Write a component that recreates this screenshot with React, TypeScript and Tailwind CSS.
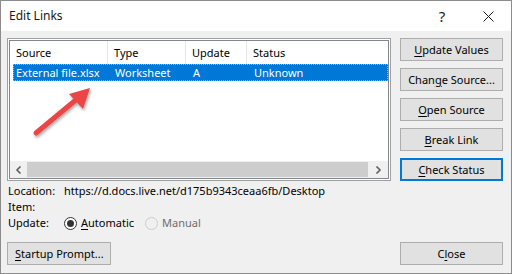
import React from "react";

function U({ children }: { children: React.ReactNode }) {
  return <span className="underline underline-offset-[2px]">{children}</span>;
}

function Btn({
  children,
  primary,
  className = "",
}: {
  children: React.ReactNode;
  primary?: boolean;
  className?: string;
}) {
  return (
    <div
      className={`flex items-center justify-center h-[23px] bg-[#e1e1e1] whitespace-nowrap text-black ${
        primary ? "border-2 border-[#0078d7]" : "border border-[#adadad]"
      } ${className}`}
    >
      {children}
    </div>
  );
}

function Arrow() {
  return (
    <svg
      className="absolute left-[13px] top-[6px]"
      width="90"
      height="110"
      viewBox="20 44 90 110"
    >
      <defs>
        <filter id="sh" x="-30%" y="-30%" width="160%" height="160%">
          <feDropShadow dx="1" dy="2" stdDeviation="1.5" floodColor="#000" floodOpacity="0.35" />
        </filter>
      </defs>
      <g filter="url(#sh)">
        <line x1="35" y1="132" x2="76" y2="98" stroke="#ec4444" strokeWidth="5" strokeLinecap="round" />
        <polygon points="89,87 68,93 82,108" fill="#ec4444" />
      </g>
    </svg>
  );
}

export default function App() {
  return (
    <div
      className="w-[512px] h-[274px] border border-[#8c8c8c] bg-[#f0f0f0] flex flex-col text-black text-[11px] leading-[16px]"
      style={{ fontFamily: '"Noto Sans", "Open Sans", sans-serif' }}
    >
      {/* Title bar */}
      <div className="h-[30px] bg-white flex items-center shrink-0">
        <div className="pl-[8px] flex-1 text-[12px] text-[#1a1a1a]">Edit Links</div>
        <div className="w-[46px] flex justify-center text-[15px] text-[#1a1a1a]">?</div>
        <div className="w-[46px] flex justify-center">
          <svg width="11" height="11" viewBox="0 0 11 11">
            <path d="M0.5 0.5 L10.5 10.5 M10.5 0.5 L0.5 10.5" stroke="#1a1a1a" strokeWidth="1" />
          </svg>
        </div>
      </div>

      {/* Body */}
      <div className="flex-1 flex flex-col pt-[7px] pl-[6px] pr-[8px] pb-[8px]">
        <div className="flex gap-[9px]">
          {/* List view */}
          <div className="relative w-[384px] h-[143px] border border-[#a0a0a0] bg-white p-px">
            <div className="w-full h-full border border-[#828790] flex flex-col">
              {/* Header */}
              <div className="h-[23px] flex items-center shrink-0">
                <div className="w-[98px] h-full flex items-center pl-[6px] border-r border-[#e5e5e5]">Source</div>
                <div className="w-[78px] h-full flex items-center pl-[6px] border-r border-[#e5e5e5]">Type</div>
                <div className="w-[61px] h-full flex items-center pl-[6px] border-r border-[#e5e5e5]">Update</div>
                <div className="flex-1 h-full flex items-center pl-[6px]">Status</div>
              </div>
              {/* Selected row */}
              <div className="ml-[3px] h-[17px] bg-[#0078d7] text-white flex items-center border border-dotted border-[#f3a04a] whitespace-nowrap">
                <div className="w-[95px] pl-[2px]">External file.xlsx</div>
                <div className="w-[78px] pl-[6px]">Worksheet</div>
                <div className="w-[61px] pl-[6px]">A</div>
                <div className="flex-1 pl-[6px]">Unknown</div>
              </div>
              <div className="flex-1" />
              {/* Horizontal scrollbar */}
              <div className="h-[17px] bg-[#f0f0f0] flex items-center shrink-0">
                <div className="w-[17px] h-full flex items-center justify-center">
                  <svg width="8" height="8" viewBox="0 0 8 8">
                    <path d="M5.5 0.5 L2 4 L5.5 7.5" stroke="#606060" strokeWidth="1.6" fill="none" />
                  </svg>
                </div>
                <div className="flex-1 h-full py-px">
                  <div className="h-full w-full bg-[#cdcdcd]" />
                </div>
                <div className="w-[20px] h-full flex items-center justify-center">
                  <svg width="8" height="8" viewBox="0 0 8 8">
                    <path d="M2.5 0.5 L6 4 L2.5 7.5" stroke="#606060" strokeWidth="1.6" fill="none" />
                  </svg>
                </div>
              </div>
            </div>
            <Arrow />
          </div>

          {/* Right buttons */}
          <div className="w-[103px] flex flex-col gap-[7px]">
            <Btn>
              <U>U</U>pdate Values
            </Btn>
            <Btn>
              Chan<U>g</U>e Source...
            </Btn>
            <Btn>
              <U>O</U>pen Source
            </Btn>
            <Btn>
              <U>B</U>reak Link
            </Btn>
            <Btn primary>
              <U>C</U>heck Status
            </Btn>
          </div>
        </div>

        {/* Info */}
        <div className="mt-[2px] flex flex-col pl-px whitespace-nowrap">
          <div className="flex h-[16px] items-center">
            <div className="w-[56px]">Location:</div>
            <div>https://d.docs.live.net/d175b9343ceaa6fb/Desktop</div>
          </div>
          <div className="flex h-[16px] items-center">
            <div className="w-[56px]">Item:</div>
          </div>
          <div className="flex h-[16px] items-center">
            <div className="w-[56px]">Update:</div>
            <div className="flex items-center gap-[4px]">
              <div className="w-[13px] h-[13px] rounded-full border border-[#333] flex items-center justify-center bg-white">
                <div className="w-[7px] h-[7px] rounded-full bg-[#333]" />
              </div>
              <span>
                <U>A</U>utomatic
              </span>
            </div>
            <div className="flex items-center gap-[4px] ml-[11px] text-[#6d6d6d]">
              <div className="w-[13px] h-[13px] rounded-full border border-[#cccccc] bg-[#f0f0f0]" />
              <span>Manual</span>
            </div>
          </div>
        </div>

        <div className="flex-1" />

        {/* Bottom buttons */}
        <div className="flex justify-between">
          <Btn className="w-[104px] justify-start pl-[7px]">
            <U>S</U>tartup Prompt...
          </Btn>
          <Btn className="w-[103px]">
            C<U>l</U>ose
          </Btn>
        </div>
      </div>
    </div>
  );
}
